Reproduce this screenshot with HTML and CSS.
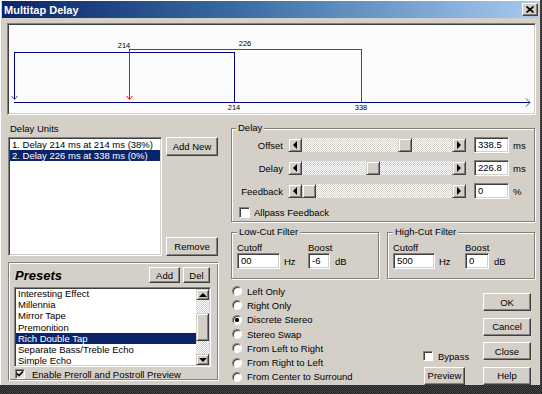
FILE: index.html
```html
<!DOCTYPE html>
<html lang="en">
<head>
    <meta charset="UTF-8">
    <meta name="viewport" content="width=device-width, initial-scale=1.0">
    <title>Multitap Delay</title>
    <link rel="stylesheet" href="styles.css">
</head>
<body>

<div class="window">
    <div class="titlebar">
        <span class="title">Multitap Delay</span>
        <span class="close">
            <svg width="8" height="7" viewBox="0 0 8 7"><path d="M0.5 0.5 L7.5 6.5 M7.5 0.5 L0.5 6.5" stroke="#000" stroke-width="1.7" fill="none"/></svg>
        </span>
    </div>

    <!-- Grafico de los retardos -->
    <div class="graph">
        <svg class="graph-svg" width="525" height="88" viewBox="0 0 525 88">
            <g class="graph-labels" text-anchor="middle">
                <text x="115" y="23">214</text>
                <text x="236" y="21">226</text>
                <text x="225" y="85">214</text>
                <text x="352" y="85">338</text>
            </g>
            <g fill="none" stroke-width="1" shape-rendering="crispEdges">
                <path d="M5.5 74 V27.5 H225.5 V77" stroke="#000080"/>
                <path d="M120.5 74 V24.5 H352.5 V77" stroke="#ff0000"/>
                <path d="M5 77.5 H521" stroke="#000080"/>
            </g>
            <g fill="none" stroke-width="1">
                <path d="M2.5 71 L5.5 74.5 L8.5 71" stroke="#3050a0"/>
                <path d="M117.5 71 L120.5 74.5 L123.5 71" stroke="#ff0000"/>
                <path d="M517 73.5 L521 77.5 L517 81.5" stroke="#3050a0"/>
            </g>
        </svg>
    </div>

    <div class="main">
        <div class="left">
            <div class="units-label">Delay Units</div>
            <div class="units">
                <div class="list units-list">
                    <div class="item">1. Delay 214 ms at 214 ms (38%)</div>
                    <div class="item sel">2. Delay 226 ms at 338 ms (0%)</div>
                </div>
                <div class="units-btns">
                    <button class="btn">Add New</button>
                    <button class="btn">Remove</button>
                </div>
            </div>

            <div class="presets">
                <div class="presets-head">
                    <span class="presets-title">Presets</span>
                    <button class="btn btn-add">Add</button>
                    <button class="btn btn-del">Del</button>
                </div>
                <div class="list presets-list">
                    <div class="presets-items">
                        <div class="item">Interesting Effect</div>
                        <div class="item">Millennia</div>
                        <div class="item">Mirror Tape</div>
                        <div class="item">Premonition</div>
                        <div class="item sel">Rich Double Tap</div>
                        <div class="item">Separate Bass/Treble Echo</div>
                        <div class="item">Simple Echo</div>
                    </div>
                    <div class="vscroll">
                        <div class="sb-btn"><span class="arr-up"></span></div>
                        <div class="vtrack">
                            <div class="vthumb" style="margin-top: 13px;"></div>
                        </div>
                        <div class="sb-btn"><span class="arr-down"></span></div>
                    </div>
                </div>
                <div class="check-row preroll">
                    <span class="checkbox checked">
                        <svg width="8" height="8" viewBox="0 0 8 8"><path d="M1 3.5 L3 5.5 L7 1.5" stroke="#000" stroke-width="1.6" fill="none"/></svg>
                    </span>
                    <span class="check-text">Enable Preroll and Postroll Preview</span>
                </div>
            </div>
        </div>

        <div class="right">
            <fieldset class="group delay">
                <legend>Delay</legend>
                <div class="slider-row">
                    <span class="slider-label">Offset</span>
                    <div class="hscroll">
                        <div class="sb-btn"><span class="arr-left"></span></div>
                        <div class="track"><div class="thumb" style="margin-left: 96px;"></div></div>
                        <div class="sb-btn"><span class="arr-right"></span></div>
                    </div>
                    <div class="edit slider-edit">338.5</div>
                    <span class="unit">ms</span>
                </div>
                <div class="slider-row">
                    <span class="slider-label">Delay</span>
                    <div class="hscroll">
                        <div class="sb-btn"><span class="arr-left"></span></div>
                        <div class="track"><div class="thumb" style="margin-left: 64px;"></div></div>
                        <div class="sb-btn"><span class="arr-right"></span></div>
                    </div>
                    <div class="edit slider-edit">226.8</div>
                    <span class="unit">ms</span>
                </div>
                <div class="slider-row">
                    <span class="slider-label">Feedback</span>
                    <div class="hscroll">
                        <div class="sb-btn"><span class="arr-left"></span></div>
                        <div class="track"><div class="thumb" style="margin-left: 0px;"></div></div>
                        <div class="sb-btn"><span class="arr-right"></span></div>
                    </div>
                    <div class="edit slider-edit">0</div>
                    <span class="unit">%</span>
                </div>
                <div class="check-row allpass">
                    <span class="checkbox"></span>
                    <span class="check-text">Allpass Feedback</span>
                </div>
            </fieldset>

            <div class="filters">
                <fieldset class="group filter low-cut">
                    <legend>Low-Cut Filter</legend>
                    <div class="filter-grid">
                        <span>Cutoff</span><span></span><span>Boost</span><span></span>
                        <div class="edit">00</div><span class="hz">Hz</span><div class="edit">-6</div><span class="db">dB</span>
                    </div>
                </fieldset>
                <fieldset class="group filter high-cut">
                    <legend>High-Cut Filter</legend>
                    <div class="filter-grid">
                        <span>Cutoff</span><span></span><span>Boost</span><span></span>
                        <div class="edit">500</div><span class="hz">Hz</span><div class="edit">0</div><span class="db">dB</span>
                    </div>
                </fieldset>
            </div>

            <div class="bottom">
                <div class="radios">
                    <div class="radio-row"><span class="radio"></span>Left Only</div>
                    <div class="radio-row"><span class="radio"></span>Right Only</div>
                    <div class="radio-row"><span class="radio on"></span>Discrete Stereo</div>
                    <div class="radio-row"><span class="radio"></span>Stereo Swap</div>
                    <div class="radio-row"><span class="radio"></span>From Left to Right</div>
                    <div class="radio-row"><span class="radio"></span>From Right to Left</div>
                    <div class="radio-row"><span class="radio"></span>From Center to Surround</div>
                </div>
                <div class="side">
                    <div class="check-row bypass">
                        <span class="checkbox"></span>
                        <span class="check-text">Bypass</span>
                    </div>
                    <button class="btn btn-preview">Preview</button>
                </div>
                <div class="btn-col">
                    <button class="btn">OK</button>
                    <button class="btn">Cancel</button>
                    <button class="btn">Close</button>
                    <button class="btn">Help</button>
                </div>
            </div>
        </div>
    </div>
</div>

</body>
</html>
```

FILE: styles.css
```css
* {
    box-sizing: border-box;
}

body {
    margin: 0;
    width: 542px;
    height: 394px;
    overflow: hidden;
    background: repeating-conic-gradient(#1e1e1e 0 25%, #4a4a4a 0 50%) 0 0 / 2px 2px;
    font-family: "Liberation Sans", Arial, sans-serif;
    font-size: 9.5px;
    color: #000;
}

.window {
    width: 541px;
    height: 385px;
    padding: 1px 2px 0 2px;
    background: #d4d0c8;
    border-right: 1px solid #404040;
    box-shadow: inset 1px 1px #fff;
}

/* Barra de titulo */
.titlebar {
    height: 17px;
    display: flex;
    align-items: center;
    justify-content: space-between;
    padding-left: 2px;
    background: linear-gradient(to right, #0a246a 0%, #3a6ea5 45%, #a6caf0 100%);
    color: #fff;
    font-weight: bold;
    font-size: 11px;
}

.close {
    width: 16px;
    height: 13px;
    display: flex;
    align-items: center;
    justify-content: center;
    background: #d4d0c8;
    border: 1px solid;
    border-color: #fff #404040 #404040 #fff;
    box-shadow: inset -1px -1px #808080;
}

/* Grafico */
.graph {
    margin: 5px 0 0 5px;
    width: 529px;
    height: 92px;
    background: #fcfcfc;
    border: 1px solid;
    border-color: #808080 #fff #fff #808080;
    box-shadow: inset 1px 1px #404040, inset -1px -1px #d4d0c8;
}

.graph-svg {
    display: block;
    margin: 1px 0 0 1px;
}

.graph-labels {
    font-family: "Liberation Sans", Arial, sans-serif;
    font-size: 7.5px;
    fill: #000;
}

.main {
    display: flex;
    gap: 11px;
    margin-top: 7px;
    padding-left: 6px;
}

.left {
    width: 212px;
}

.right {
    width: 305px;
}

/* Controles comunes */
.btn {
    display: flex;
    align-items: center;
    justify-content: center;
    padding: 0;
    background: #d4d0c8;
    border: 1px solid;
    border-color: #fff #404040 #404040 #fff;
    box-shadow: inset -1px -1px #808080;
    font: inherit;
    color: #000;
}

.list {
    background: #fff;
    border: 1px solid;
    border-color: #808080 #fff #fff #808080;
    box-shadow: inset 1px 1px #404040, inset -1px -1px #d4d0c8;
}

.item {
    white-space: nowrap;
    padding-left: 2px;
}

.item.sel {
    background: #0a246a;
    color: #fff;
}

.edit {
    height: 16px;
    padding-left: 3px;
    line-height: 14px;
    background: #fff;
    border: 1px solid;
    border-color: #808080 #fff #fff #808080;
    box-shadow: inset 1px 1px #404040, inset -1px -1px #d4d0c8;
}

.checkbox {
    width: 11px;
    height: 11px;
    flex: none;
    display: flex;
    align-items: center;
    justify-content: center;
    background: #fff;
    border: 1px solid;
    border-color: #808080 #fff #fff #808080;
    box-shadow: inset 1px 1px #404040;
}

.check-row {
    display: flex;
    align-items: center;
}

.sb-btn {
    width: 14px;
    height: 14px;
    flex: none;
    display: flex;
    align-items: center;
    justify-content: center;
    background: #d4d0c8;
    border: 1px solid;
    border-color: #d4d0c8 #404040 #404040 #d4d0c8;
    box-shadow: inset 1px 1px #fff, inset -1px -1px #808080;
}

.arr-left, .arr-right, .arr-up, .arr-down {
    width: 0;
    height: 0;
    border: 4px solid transparent;
}

.arr-left { border-right-color: #000; border-left-width: 0; }
.arr-right { border-left-color: #000; border-right-width: 0; }
.arr-up { border-bottom-color: #000; border-top-width: 0; }
.arr-down { border-top-color: #000; border-bottom-width: 0; }

/* Delay Units */
.units-label {
    height: 13px;
    line-height: 13px;
    padding-left: 2px;
}

.units {
    display: flex;
    gap: 4px;
    margin-top: 2px;
    height: 119px;
}

.units-list {
    width: 154px;
    padding: 1px;
    line-height: 11px;
}

.units-btns {
    width: 52px;
    display: flex;
    flex-direction: column;
    justify-content: space-between;
}

.units-btns .btn {
    height: 19px;
}

/* Presets */
.presets {
    width: 211px;
    height: 119px;
    margin-top: 6px;
    padding: 4px 7px 0 5px;
    border: 1px solid;
    border-color: #808080 #fff #fff #808080;
    box-shadow: inset 1px 1px #fff, inset -1px -1px #808080;
}

.presets-head {
    height: 16px;
    display: flex;
    align-items: center;
}

.presets-title {
    flex: 1;
    padding-left: 1px;
    font-size: 13px;
    font-weight: bold;
    font-style: italic;
}

.presets-head .btn {
    height: 16px;
}

.btn-add {
    width: 31px;
    margin-right: 3px;
}

.btn-del {
    width: 27px;
    margin-right: 1px;
}

.presets-list {
    margin-top: 4px;
    height: 80px;
    display: flex;
    padding: 1px;
}

.presets-items {
    flex: 1;
    overflow: hidden;
    line-height: 11.2px;
}

.presets-items .item:first-child {
    margin-top: -1px;
}

.vscroll {
    width: 13px;
    display: flex;
    flex-direction: column;
    background: repeating-conic-gradient(#fff 0 25%, #d4d0c8 0 50%) 0 0 / 2px 2px;
}

.vscroll .sb-btn {
    width: 13px;
    height: 11px;
}

.vtrack {
    flex: 1;
}

.vthumb {
    height: 28px;
    background: #d4d0c8;
    border: 1px solid;
    border-color: #d4d0c8 #404040 #404040 #d4d0c8;
    box-shadow: inset 1px 1px #fff, inset -1px -1px #808080;
}

.preroll {
    margin-top: 1px;
    height: 12px;
    padding-left: 1px;
}

.preroll .checkbox {
    width: 10px;
    height: 10px;
    background: #e4e2dc;
}

.preroll .check-text {
    margin-left: 7px;
}

/* Grupos */
.group {
    margin: 0;
    padding: 3px 0 0 4px;
    border: 1px solid #808080;
    box-shadow: inset 1px 1px #fff, 1px 1px #fff;
    min-width: 0;
}

.group legend {
    padding: 0 2px;
    line-height: 12px;
    background: #d4d0c8;
}

.delay {
    width: 304px;
    height: 100px;
}

.slider-row {
    display: flex;
    align-items: center;
    height: 16px;
    margin-bottom: 7px;
}

.slider-label {
    width: 47px;
    text-align: right;
}

.hscroll {
    width: 178px;
    height: 14px;
    margin-left: 5px;
    display: flex;
    background: repeating-conic-gradient(#fff 0 25%, #d4d0c8 0 50%) 0 0 / 2px 2px;
}

.track {
    flex: 1;
}

.thumb {
    width: 14px;
    height: 14px;
    background: #d4d0c8;
    border: 1px solid;
    border-color: #d4d0c8 #404040 #404040 #d4d0c8;
    box-shadow: inset 1px 1px #fff, inset -1px -1px #808080;
}

.slider-edit {
    width: 35px;
    margin-left: 8px;
}

.unit {
    margin-left: 4px;
}

.allpass {
    height: 12px;
    padding-left: 3px;
}

.allpass .check-text {
    margin-left: 4px;
}

/* Filtros */
.filters {
    display: flex;
    gap: 8px;
    margin-top: 4px;
}

.filter {
    width: 148px;
    height: 53px;
    padding-left: 5px;
}

.filter-grid {
    display: grid;
    grid-template-rows: 12px 16px;
    align-items: center;
}

.low-cut .filter-grid {
    grid-template-columns: 43px 28px 22px auto;
}

.high-cut .filter-grid {
    grid-template-columns: 42px 30px 24px auto;
}

.hz {
    padding-left: 4px;
}

.db {
    padding-left: 5px;
}

/* Parte inferior */
.bottom {
    display: flex;
    margin-top: 5px;
    height: 101px;
}

.radios {
    width: 192px;
}

.radio-row {
    height: 14.3px;
    display: flex;
    align-items: center;
}

.radio {
    width: 10px;
    height: 10px;
    margin: 0 5px 0 1px;
    border-radius: 50%;
    background: #fff;
    border: 1px solid;
    border-color: #808080 #fff #fff #808080;
    box-shadow: inset 1px 1px #404040;
}

.radio.on {
    background: radial-gradient(circle, #000 0 1.8px, #fff 2.3px);
}

.side {
    width: 44px;
    display: flex;
    flex-direction: column;
    justify-content: flex-end;
    padding-bottom: 0.5px;
}

.bypass {
    height: 11px;
    margin-bottom: 5px;
}

.bypass .checkbox {
    width: 10px;
    height: 10px;
}

.bypass .check-text {
    margin-left: 5px;
}

.btn-preview {
    width: 41px;
    height: 18px;
    margin-left: 1px;
}

.btn-col {
    width: 48px;
    margin-left: 16px;
    padding-top: 9px;
    display: flex;
    flex-direction: column;
    gap: 6.5px;
}

.btn-col .btn {
    height: 18px;
}
```
